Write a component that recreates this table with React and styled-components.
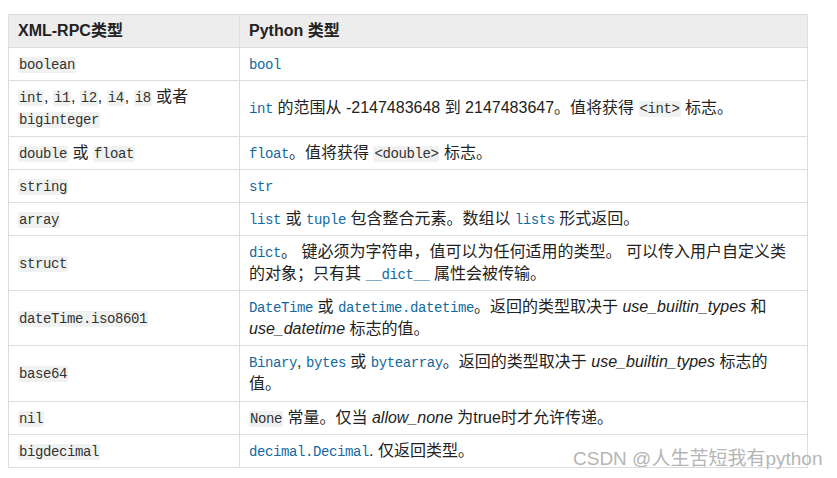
import React from "react";
import styled, { createGlobalStyle } from "styled-components";

const Global = createGlobalStyle`
  html, body { margin: 0; padding: 0; background: #fff; }
  body {
    font-family: "Liberation Sans", Arial, "Noto Sans CJK SC", sans-serif;
    color: #222;
  }
`;

const Page = styled.div`
  position: relative;
  width: 837px;
  height: 478px;
  padding: 14px 0 0 8px;
  box-sizing: border-box;
  overflow: hidden;
`;

const Table = styled.table`
  width: 800px;
  border-collapse: collapse;
  border: 1px solid #dddddd;
  font-size: 16px;
  line-height: 22px;
`;

const HeadCell = styled.th`
  background: #ededed;
  border: 1px solid #dddddd;
  padding: 5px 9px;
  text-align: left;
  font-weight: bold;
  color: #222;
  width: ${(p) => p.$w || "auto"};
`;

const Cell = styled.td`
  border: 1px solid #dddddd;
  padding: ${(p) => (p.$tall ? "5px 9px 6px" : "5px 9px")};
  vertical-align: middle;
  text-align: left;
  color: #222;
`;

const Code = styled.code`
  font-family: "Liberation Mono", "Courier New", "Noto Sans CJK SC", monospace;
  font-size: 14px;
  letter-spacing: -0.4px;
  line-height: 1;
  background: #f0f2f2;
  border-radius: 2px;
  padding: 0 1px;
  color: #333;
`;

const Ref = styled.code`
  font-family: "Liberation Mono", "Courier New", monospace;
  font-size: 14px;
  letter-spacing: -0.4px;
  line-height: 1;
  color: #11699e;
`;

const Em = styled.em`
  font-style: italic;
`;

const Watermark = styled.div`
  position: absolute;
  left: 573px;
  top: 447px;
  font-family: "Liberation Sans", Arial, "Noto Sans CJK SC", sans-serif;
  font-size: 19px;
  line-height: 24px;
  color: #b5b5b5;
  white-space: nowrap;
  text-shadow: 0 0 1px rgba(255, 255, 255, 0.9);
`;

export default function App() {
  return (
    <>
      <Global />
      <Page>
        <Table>
          <thead>
            <tr>
              <HeadCell $w="212px">XML-RPC类型</HeadCell>
              <HeadCell>Python 类型</HeadCell>
            </tr>
          </thead>
          <tbody>
            <tr>
              <Cell><Code>boolean</Code></Cell>
              <Cell><Ref>bool</Ref></Cell>
            </tr>
            <tr>
              <Cell $tall>
                <Code>int</Code>, <Code>i1</Code>, <Code>i2</Code>, <Code>i4</Code>, <Code>i8</Code> 或者 <Code>biginteger</Code>
              </Cell>
              <Cell $tall>
                <Ref>int</Ref> 的范围从 -2147483648 到 2147483647。值将获得 <Code>&lt;int&gt;</Code> 标志。
              </Cell>
            </tr>
            <tr>
              <Cell><Code>double</Code> 或 <Code>float</Code></Cell>
              <Cell><Ref>float</Ref>。值将获得 <Code>&lt;double&gt;</Code> 标志。</Cell>
            </tr>
            <tr>
              <Cell><Code>string</Code></Cell>
              <Cell><Ref>str</Ref></Cell>
            </tr>
            <tr>
              <Cell><Code>array</Code></Cell>
              <Cell><Ref>list</Ref> 或 <Ref>tuple</Ref> 包含整合元素。数组以 <Ref>lists</Ref> 形式返回。</Cell>
            </tr>
            <tr>
              <Cell><Code>struct</Code></Cell>
              <Cell>
                <Ref>dict</Ref>。 键必须为字符串，值可以为任何适用的类型。 可以传入用户自定义类的对象；只有其 <Ref>__dict__</Ref> 属性会被传输。
              </Cell>
            </tr>
            <tr>
              <Cell><Code>dateTime.iso8601</Code></Cell>
              <Cell>
                <Ref>DateTime</Ref> 或 <Ref>datetime.datetime</Ref>。返回的类型取决于 <Em>use_builtin_types</Em> 和 <Em>use_datetime</Em> 标志的值。
              </Cell>
            </tr>
            <tr>
              <Cell $tall><Code>base64</Code></Cell>
              <Cell $tall>
                <Ref>Binary</Ref>, <Ref>bytes</Ref> 或 <Ref>bytearray</Ref>。返回的类型取决于 <Em>use_builtin_types</Em> 标志的值。
              </Cell>
            </tr>
            <tr>
              <Cell><Code>nil</Code></Cell>
              <Cell><Code>None</Code> 常量。仅当 <Em>allow_none</Em> 为true时才允许传递。</Cell>
            </tr>
            <tr>
              <Cell><Code>bigdecimal</Code></Cell>
              <Cell><Ref>decimal.Decimal</Ref>. 仅返回类型。</Cell>
            </tr>
          </tbody>
        </Table>
        <Watermark>CSDN @人生苦短我有python</Watermark>
      </Page>
    </>
  );
}
